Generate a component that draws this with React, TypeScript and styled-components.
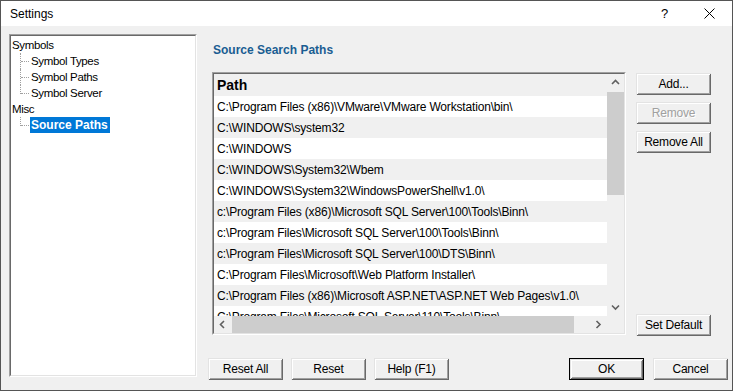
import React from 'react';
import styled, { createGlobalStyle, css } from 'styled-components';

const FONT = `"Segoe UI", "Liberation Sans", Arial, sans-serif`;

const GlobalStyle = createGlobalStyle`
  html, body { margin: 0; padding: 0; background: #fff; }
  body { font-family: ${FONT}; font-size: 12px; color: #000; }
  * { box-sizing: border-box; }
`;

const Window = styled.div`
  width: 733px;
  height: 391px;
  border: 1px solid #555;
  display: flex;
  flex-direction: column;
  background: #f0f0f0;
  overflow: hidden;
`;

const TitleBar = styled.div`
  height: 25px;
  flex: none;
  background: #fff;
  display: flex;
  align-items: center;
  padding-left: 9px;
`;

const Title = styled.span`
  flex: 1;
  font-size: 12px;
`;

const CaptionButton = styled.div`
  width: 45px;
  height: 25px;
  display: flex;
  align-items: center;
  justify-content: center;
  font-size: 13px;
`;

const Body = styled.div`
  flex: 1;
  display: flex;
  gap: 11px;
  padding: 8px 4px 0 8px;
`;

const TreePanel = styled.div`
  width: 188px;
  height: 343px;
  flex: none;
  background: #fff;
  border: 1px solid;
  border-color: #a0a0a0 #fff #fff #a0a0a0;
`;

const TreeInner = styled.div`
  height: 100%;
  border: 1px solid;
  border-color: #696969 #e3e3e3 #e3e3e3 #696969;
  padding-top: 1px;
`;

const TreeRow = styled.div<{ $indent?: boolean }>`
  height: 16px;
  display: flex;
  align-items: center;
  padding-left: ${(p) => (p.$indent ? '9px' : '0')};
`;

const Connector = styled.span<{ $last?: boolean }>`
  position: relative;
  width: 10px;
  height: 16px;
  flex: none;
  &::before {
    content: '';
    position: absolute;
    left: 0;
    top: 0;
    height: ${(p) => (p.$last ? '9px' : '16px')};
    border-left: 1px dotted #a0a0a0;
  }
  &::after {
    content: '';
    position: absolute;
    left: 1px;
    top: 8px;
    width: 8px;
    border-top: 1px dotted #a0a0a0;
  }
`;

const TreeLabel = styled.span<{ $selected?: boolean }>`
  line-height: 16px;
  padding: 0 2px 0 1px;
  white-space: nowrap;
  font-size: 11.5px;
  letter-spacing: -0.35px;
  ${(p) =>
    p.$selected &&
    css`
      background: #0078d7;
      color: #fff;
      font-weight: bold;
      font-size: 12px;
      letter-spacing: 0;
    `}
`;

const RightPane = styled.div`
  flex: 1;
  display: flex;
  flex-direction: column;
`;

const Heading = styled.div`
  padding: 8px 0 0 5px;
  line-height: 16px;
  font-weight: bold;
  font-size: 12px;
  color: #1a5d92;
`;

const MainRow = styled.div`
  margin: 14px 0 0 4px;
  display: flex;
  gap: 10px;
`;

const ListOuter = styled.div`
  width: 414px;
  height: 263px;
  border: 1px solid;
  border-color: #a0a0a0 #fff #fff #a0a0a0;
`;

const ListInner = styled.div`
  height: 100%;
  border: 1px solid;
  border-color: #696969 #e3e3e3 #e3e3e3 #696969;
  display: grid;
  grid-template-columns: 1fr 17px;
  grid-template-rows: 1fr 17px;
  background: #fff;
`;

const Viewport = styled.div`
  overflow: hidden;
  background: #fff;
`;

const HeaderRow = styled.div`
  height: 22px;
  display: flex;
  align-items: center;
  padding-left: 3px;
  background: #f0f0f0;
  font-weight: bold;
  font-size: 14px;
`;

const PathRow = styled.div<{ $alt?: boolean }>`
  height: 21px;
  display: flex;
  align-items: center;
  padding-left: 3px;
  white-space: nowrap;
  letter-spacing: -0.17px;
  background: ${(p) => (p.$alt ? '#f0f0f0' : '#fff')};
`;

const VScroll = styled.div`
  display: flex;
  flex-direction: column;
  background: #f0f0f0;
`;

const HScroll = styled.div`
  display: flex;
  background: #f0f0f0;
`;

const ArrowBox = styled.div`
  width: 17px;
  height: 17px;
  flex: none;
  display: flex;
  align-items: center;
  justify-content: center;
`;

const Track = styled.div`
  flex: 1;
  display: flex;
`;

const VThumb = styled.div`
  width: 17px;
  height: 103px;
  margin-top: 1px;
  background: #cdcdcd;
`;

const HThumb = styled.div`
  height: 17px;
  width: 342px;
  margin-left: 1px;
  background: #cdcdcd;
`;

const Corner = styled.div`
  background: #f0f0f0;
`;

const ButtonColumn = styled.div`
  width: 75px;
  height: 264px;
  padding-top: 1px;
  display: flex;
  flex-direction: column;
  gap: 7px;
`;

const Button = styled.button<{ $default?: boolean; $pushDown?: boolean }>`
  width: 75px;
  height: 22px;
  flex: none;
  padding: 0;
  font-family: ${FONT};
  font-size: 12px;
  letter-spacing: -0.2px;
  color: #000;
  background: #f0f0f0;
  border: ${(p) => (p.$default ? '1px solid #000' : 'none')};
  box-shadow: inset 1px 1px 0 #e3e3e3, inset -1px -1px 0 #696969, inset 2px 2px 0 #fff,
    inset -2px -2px 0 #a0a0a0;
  margin-top: ${(p) => (p.$pushDown ? 'auto' : '0')};
  &:disabled {
    color: #a0a0a0;
    text-shadow: 1px 1px 0 #fff;
  }
`;

const BottomBar = styled.div`
  margin-top: 22px;
  display: flex;
`;

const ButtonGroup = styled.div<{ $gap: number; $right?: boolean }>`
  display: flex;
  gap: ${(p) => p.$gap}px;
  margin-left: ${(p) => (p.$right ? 'auto' : '0')};
`;

const Chevron = ({ dir }: { dir: 'up' | 'down' | 'left' | 'right' }) => {
  const pts: Record<string, string> = {
    up: '1,5 4.5,1.5 8,5',
    down: '1,1.5 4.5,5 8,1.5',
    left: '5,1 1.5,4.5 5,8',
    right: '1.5,1 5,4.5 1.5,8',
  };
  const vertical = dir === 'up' || dir === 'down';
  return (
    <svg width={vertical ? 9 : 7} height={vertical ? 7 : 9} viewBox={vertical ? '0 0 9 7' : '0 0 7 9'}>
      <polyline points={pts[dir]} fill="none" stroke="#606060" strokeWidth="1.6" />
    </svg>
  );
};

const paths = [
  'C:\\Program Files (x86)\\VMware\\VMware Workstation\\bin\\',
  'C:\\WINDOWS\\system32',
  'C:\\WINDOWS',
  'C:\\WINDOWS\\System32\\Wbem',
  'C:\\WINDOWS\\System32\\WindowsPowerShell\\v1.0\\',
  'c:\\Program Files (x86)\\Microsoft SQL Server\\100\\Tools\\Binn\\',
  'c:\\Program Files\\Microsoft SQL Server\\100\\Tools\\Binn\\',
  'c:\\Program Files\\Microsoft SQL Server\\100\\DTS\\Binn\\',
  'C:\\Program Files\\Microsoft\\Web Platform Installer\\',
  'C:\\Program Files (x86)\\Microsoft ASP.NET\\ASP.NET Web Pages\\v1.0\\',
  'C:\\Program Files\\Microsoft SQL Server\\110\\Tools\\Binn\\',
];

export default function App() {
  return (
    <>
      <GlobalStyle />
      <Window>
        <TitleBar>
          <Title>Settings</Title>
          <CaptionButton>?</CaptionButton>
          <CaptionButton>
            <svg width="11" height="11" viewBox="0 0 11 11">
              <path d="M0.5 0.5 L10.5 10.5 M10.5 0.5 L0.5 10.5" stroke="#000" strokeWidth="1" />
            </svg>
          </CaptionButton>
        </TitleBar>
        <Body>
          <TreePanel>
            <TreeInner>
              <TreeRow>
                <TreeLabel>Symbols</TreeLabel>
              </TreeRow>
              <TreeRow $indent>
                <Connector />
                <TreeLabel>Symbol Types</TreeLabel>
              </TreeRow>
              <TreeRow $indent>
                <Connector />
                <TreeLabel>Symbol Paths</TreeLabel>
              </TreeRow>
              <TreeRow $indent>
                <Connector $last />
                <TreeLabel>Symbol Server</TreeLabel>
              </TreeRow>
              <TreeRow>
                <TreeLabel>Misc</TreeLabel>
              </TreeRow>
              <TreeRow $indent>
                <Connector $last />
                <TreeLabel $selected>Source Paths</TreeLabel>
              </TreeRow>
            </TreeInner>
          </TreePanel>
          <RightPane>
            <Heading>Source Search Paths</Heading>
            <MainRow>
              <ListOuter>
                <ListInner>
                  <Viewport>
                    <HeaderRow>Path</HeaderRow>
                    {paths.map((p, i) => (
                      <PathRow key={i} $alt={i % 2 === 1}>
                        {p}
                      </PathRow>
                    ))}
                  </Viewport>
                  <VScroll>
                    <ArrowBox>
                      <Chevron dir="up" />
                    </ArrowBox>
                    <Track>
                      <VThumb />
                    </Track>
                    <ArrowBox>
                      <Chevron dir="down" />
                    </ArrowBox>
                  </VScroll>
                  <HScroll>
                    <ArrowBox>
                      <Chevron dir="left" />
                    </ArrowBox>
                    <Track>
                      <HThumb />
                    </Track>
                    <ArrowBox>
                      <Chevron dir="right" />
                    </ArrowBox>
                  </HScroll>
                  <Corner />
                </ListInner>
              </ListOuter>
              <ButtonColumn>
                <Button>Add...</Button>
                <Button disabled>Remove</Button>
                <Button>Remove All</Button>
                <Button $pushDown>Set Default</Button>
              </ButtonColumn>
            </MainRow>
            <BottomBar>
              <ButtonGroup $gap={8}>
                <Button>Reset All</Button>
                <Button>Reset</Button>
                <Button>Help (F1)</Button>
              </ButtonGroup>
              <ButtonGroup $gap={9} $right>
                <Button $default>OK</Button>
                <Button>Cancel</Button>
              </ButtonGroup>
            </BottomBar>
          </RightPane>
        </Body>
      </Window>
    </>
  );
}
